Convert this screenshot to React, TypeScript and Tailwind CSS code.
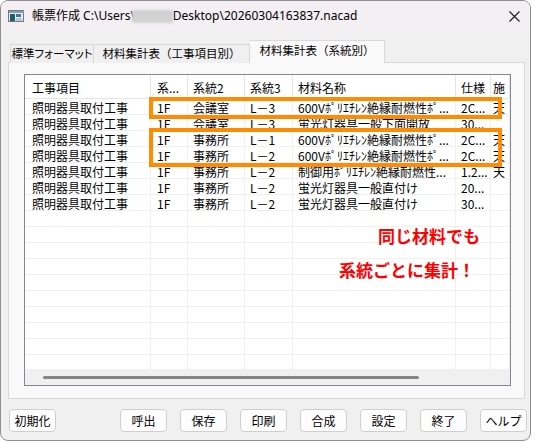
import React from 'react';

const rows: string[][] = [
  ['照明器具取付工事', '1F', '会議室', 'L－3', '600Vﾎﾟﾘｴﾁﾚﾝ絶縁耐燃性ﾎﾟ...', '2C...', '天'],
  ['照明器具取付工事', '1F', '会議室', 'L－3', '蛍光灯器具一般下面開放', '30...', ''],
  ['照明器具取付工事', '1F', '事務所', 'L－1', '600Vﾎﾟﾘｴﾁﾚﾝ絶縁耐燃性ﾎﾟ...', '2C...', '天'],
  ['照明器具取付工事', '1F', '事務所', 'L－2', '600Vﾎﾟﾘｴﾁﾚﾝ絶縁耐燃性ﾎﾟ...', '2C...', '天'],
  ['照明器具取付工事', '1F', '事務所', 'L－2', '制御用ﾎﾟﾘｴﾁﾚﾝ絶縁耐燃性...', '1.2...', '天'],
  ['照明器具取付工事', '1F', '事務所', 'L－2', '蛍光灯器具一般直付け', '20...', ''],
  ['照明器具取付工事', '1F', '事務所', 'L－2', '蛍光灯器具一般直付け', '30...', ''],
];

const headers = ['工事項目', '系...', '系統2', '系統3', '材料名称', '仕様', '施'];

// column widths + left padding, written out so tailwind picks them up
const colCls = [
  'w-[126px] pl-[7px]',
  'w-[37px] pl-[6px]',
  'w-[57px] pl-[5px]',
  'w-[48px] pl-[5px]',
  'w-[163px] pl-[5px]',
  'w-[35px] pl-[5px]',
  'w-[19px] pl-[2px]',
];

const buttons = ['呼出', '保存', '印刷', '合成', '設定', '終了', 'ヘルプ'];

function AppIcon() {
  return (
    <svg width="16" height="12" viewBox="0 0 16 12">
      <rect x="0.5" y="0.5" width="15" height="11" fill="#e9eef2" stroke="#6d7a86" />
      <rect x="1" y="1" width="15" height="2" fill="#8a9aa8" />
      <rect x="2" y="4" width="5" height="7" fill="#1f5c6b" />
      <rect x="8" y="4" width="5" height="3" fill="#3a7c8c" />
      <rect x="8" y="8" width="6" height="3" fill="#b9c7d0" />
    </svg>
  );
}

function Btn({ label }: { label: string }) {
  return (
    <button className="w-[47px] h-[23px] shrink-0 rounded-[4px] border border-[#cfcfcf] bg-[#fdfdfd] text-[12px] leading-none text-black">
      {label}
    </button>
  );
}

export default function App() {
  return (
    <div className="relative w-[535px] h-[442px] bg-white font-['Noto_Sans','Noto_Sans_CJK_JP',sans-serif] text-black overflow-hidden">
      {/* window */}
      <div className="w-[531px] h-[441px] border border-[#8f8f8f] rounded-lg overflow-hidden bg-[#f0f0f0] flex flex-col">
        {/* title bar */}
        <div className="h-[30px] shrink-0 bg-[#f4eff2] flex items-center pl-[7px] pr-[8px]">
          <AppIcon />
          <div className="ml-[8px] text-[12px] leading-none flex items-center whitespace-nowrap">
            <span>帳票作成 C:\Users\</span>
            <span className="inline-block w-[41px] h-[13px] -ml-[3px] bg-[#d2d2d2] blur-[1px]" />
            <span>Desktop\20260304163837.nacad</span>
          </div>
          <div className="flex-1" />
          <svg width="11" height="11" viewBox="0 0 11 11" className="mr-[2px]">
            <path d="M0.5 0.5 L10.5 10.5 M10.5 0.5 L0.5 10.5" stroke="#1a1a1a" strokeWidth="1.1" />
          </svg>
        </div>

        {/* tabs */}
        <div className="ml-[9px] mt-[9px] h-[23px] flex items-end -mb-[1px] relative z-10 font-['Noto_Sans_CJK_JP',sans-serif] text-[11.5px] leading-none whitespace-nowrap">
          <div className="w-[84px] h-[19px] border border-b-0 border-[#d9d9d9] bg-[#f0f0f0] flex items-center justify-center [font-feature-settings:'palt']">
            標準フォーマット
          </div>
          <div className="w-[156px] h-[19px] border border-l-0 border-b-0 border-[#d9d9d9] bg-[#f0f0f0] flex items-center justify-center">
            材料集計表（工事項目別）
          </div>
          <div className="w-[135px] h-[23px] border border-l-0 border-b-0 border-[#d9d9d9] bg-[#f9f9f9] flex items-center justify-center pb-[2px]">
            材料集計表（系統別）
          </div>
        </div>

        {/* tab page */}
        <div className="ml-[7px] w-[517px] h-[337px] shrink-0 border border-[#d9d9d9] bg-[#f9f9f9] pt-[11px] pl-[15px]">
          {/* list view */}
          <div className="w-[487px] h-[312px] border border-[#828790] bg-white flex flex-col font-['Noto_Sans_CJK_JP',sans-serif] text-[12px] leading-none">
            <div className="h-[24px] shrink-0 flex border-b border-[#e5e5e5]">
              {headers.map((h, i) => (
                <div key={i} className={`${colCls[i]} shrink-0 h-full flex items-center pt-[3px] border-r border-[#e5e5e5] overflow-hidden whitespace-nowrap`}>
                  {h}
                </div>
              ))}
            </div>
            <div className="h-[270px] shrink-0 overflow-hidden flex flex-col">
              {Array.from({ length: 17 }).map((_, r) => (
                <div key={r} className="h-[16px] shrink-0 flex border-b border-[#f0f0f0]">
                  {colCls.map((c, i) => (
                    <div key={i} className={`${c} shrink-0 h-full flex items-center pt-[2px] border-r border-[#f0f0f0] overflow-hidden whitespace-nowrap`}>
                      {rows[r] ? rows[r][i] : ''}
                    </div>
                  ))}
                </div>
              ))}
            </div>
            <div className="h-[16px] shrink-0 bg-[#f0f0f0] flex items-center">
              <div className="ml-[18px] w-[376px] h-[3px] rounded-full bg-[#858585]" />
            </div>
          </div>
        </div>

        {/* buttons */}
        <div className="mt-[10px] flex items-start pl-[8px] font-['Noto_Sans_CJK_JP',sans-serif]">
          <Btn label="初期化" />
          <div className="flex gap-[13px] ml-[64px]">
            {buttons.map((b) => (
              <Btn key={b} label={b} />
            ))}
          </div>
        </div>
      </div>

      {/* annotation overlays */}
      <div className="absolute left-[149px] top-[97px] w-[353px] h-[22px] border-4 border-[#ff8c00]" />
      <div className="absolute left-[149px] top-[128px] w-[353px] h-[39px] border-4 border-[#ff8c00]" />
      <div className="absolute left-[378px] top-[227px] text-[17px] leading-none font-bold text-[#ff0000] font-['Noto_Sans_CJK_JP',sans-serif] whitespace-nowrap">
        同じ材料でも
      </div>
      <div className="absolute left-[339px] top-[261px] text-[17px] leading-none font-bold text-[#ff0000] font-['Noto_Sans_CJK_JP',sans-serif] whitespace-nowrap">
        系統ごとに集計！
      </div>
    </div>
  );
}
